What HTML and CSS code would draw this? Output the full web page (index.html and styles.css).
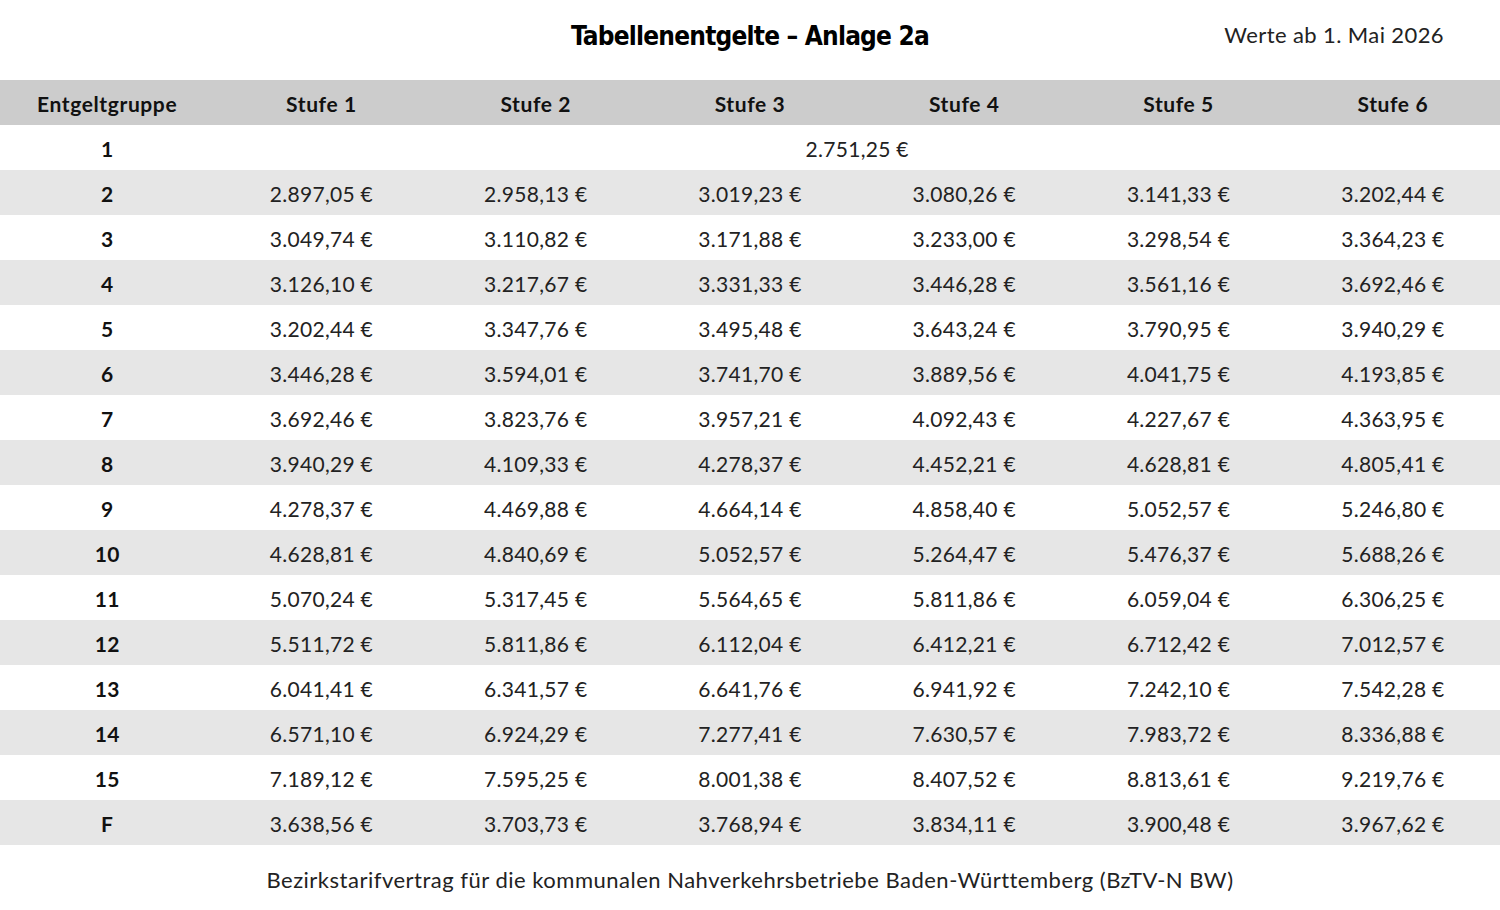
FILE: index.html
```html
<!DOCTYPE html>
<html lang="de">
<head>
<meta charset="utf-8">
<title>Tabellenentgelte – Anlage 2a</title>
<link rel="stylesheet" href="styles.css">
</head>
<body>
<div class="page">
  <header class="top">
    <h1 class="title">Tabellenentgelte – Anlage 2a</h1>
    <div class="date">Werte ab 1. Mai 2026</div>
  </header>
  <div class="table">
    <div class="row head">
      <div class="cell">Entgeltgruppe</div><div class="cell">Stufe 1</div><div class="cell">Stufe 2</div><div class="cell">Stufe 3</div><div class="cell">Stufe 4</div><div class="cell">Stufe 5</div><div class="cell">Stufe 6</div>
    </div>
    <div class="row">
      <div class="cell grp">1</div><div class="cell span6">2.751,25 €</div>
    </div>
    <div class="row alt">
      <div class="cell grp">2</div><div class="cell">2.897,05 €</div><div class="cell">2.958,13 €</div><div class="cell">3.019,23 €</div><div class="cell">3.080,26 €</div><div class="cell">3.141,33 €</div><div class="cell">3.202,44 €</div>
    </div>
    <div class="row">
      <div class="cell grp">3</div><div class="cell">3.049,74 €</div><div class="cell">3.110,82 €</div><div class="cell">3.171,88 €</div><div class="cell">3.233,00 €</div><div class="cell">3.298,54 €</div><div class="cell">3.364,23 €</div>
    </div>
    <div class="row alt">
      <div class="cell grp">4</div><div class="cell">3.126,10 €</div><div class="cell">3.217,67 €</div><div class="cell">3.331,33 €</div><div class="cell">3.446,28 €</div><div class="cell">3.561,16 €</div><div class="cell">3.692,46 €</div>
    </div>
    <div class="row">
      <div class="cell grp">5</div><div class="cell">3.202,44 €</div><div class="cell">3.347,76 €</div><div class="cell">3.495,48 €</div><div class="cell">3.643,24 €</div><div class="cell">3.790,95 €</div><div class="cell">3.940,29 €</div>
    </div>
    <div class="row alt">
      <div class="cell grp">6</div><div class="cell">3.446,28 €</div><div class="cell">3.594,01 €</div><div class="cell">3.741,70 €</div><div class="cell">3.889,56 €</div><div class="cell">4.041,75 €</div><div class="cell">4.193,85 €</div>
    </div>
    <div class="row">
      <div class="cell grp">7</div><div class="cell">3.692,46 €</div><div class="cell">3.823,76 €</div><div class="cell">3.957,21 €</div><div class="cell">4.092,43 €</div><div class="cell">4.227,67 €</div><div class="cell">4.363,95 €</div>
    </div>
    <div class="row alt">
      <div class="cell grp">8</div><div class="cell">3.940,29 €</div><div class="cell">4.109,33 €</div><div class="cell">4.278,37 €</div><div class="cell">4.452,21 €</div><div class="cell">4.628,81 €</div><div class="cell">4.805,41 €</div>
    </div>
    <div class="row">
      <div class="cell grp">9</div><div class="cell">4.278,37 €</div><div class="cell">4.469,88 €</div><div class="cell">4.664,14 €</div><div class="cell">4.858,40 €</div><div class="cell">5.052,57 €</div><div class="cell">5.246,80 €</div>
    </div>
    <div class="row alt">
      <div class="cell grp">10</div><div class="cell">4.628,81 €</div><div class="cell">4.840,69 €</div><div class="cell">5.052,57 €</div><div class="cell">5.264,47 €</div><div class="cell">5.476,37 €</div><div class="cell">5.688,26 €</div>
    </div>
    <div class="row">
      <div class="cell grp">11</div><div class="cell">5.070,24 €</div><div class="cell">5.317,45 €</div><div class="cell">5.564,65 €</div><div class="cell">5.811,86 €</div><div class="cell">6.059,04 €</div><div class="cell">6.306,25 €</div>
    </div>
    <div class="row alt">
      <div class="cell grp">12</div><div class="cell">5.511,72 €</div><div class="cell">5.811,86 €</div><div class="cell">6.112,04 €</div><div class="cell">6.412,21 €</div><div class="cell">6.712,42 €</div><div class="cell">7.012,57 €</div>
    </div>
    <div class="row">
      <div class="cell grp">13</div><div class="cell">6.041,41 €</div><div class="cell">6.341,57 €</div><div class="cell">6.641,76 €</div><div class="cell">6.941,92 €</div><div class="cell">7.242,10 €</div><div class="cell">7.542,28 €</div>
    </div>
    <div class="row alt">
      <div class="cell grp">14</div><div class="cell">6.571,10 €</div><div class="cell">6.924,29 €</div><div class="cell">7.277,41 €</div><div class="cell">7.630,57 €</div><div class="cell">7.983,72 €</div><div class="cell">8.336,88 €</div>
    </div>
    <div class="row">
      <div class="cell grp">15</div><div class="cell">7.189,12 €</div><div class="cell">7.595,25 €</div><div class="cell">8.001,38 €</div><div class="cell">8.407,52 €</div><div class="cell">8.813,61 €</div><div class="cell">9.219,76 €</div>
    </div>
    <div class="row alt">
      <div class="cell grp">F</div><div class="cell">3.638,56 €</div><div class="cell">3.703,73 €</div><div class="cell">3.768,94 €</div><div class="cell">3.834,11 €</div><div class="cell">3.900,48 €</div><div class="cell">3.967,62 €</div>
    </div>
  </div>
  <footer class="foot">Bezirkstarifvertrag für die kommunalen Nahverkehrsbetriebe Baden-Württemberg (BzTV-N BW)</footer>
</div>
</body>
</html>
```
FILE: styles.css
```css
* { box-sizing: border-box; }
html, body { margin: 0; padding: 0; background: #ffffff; }
body {
  font-family: Lato, "Noto Sans", "Liberation Sans", sans-serif;
  color: #222222;
  width: 1500px;
}
.page { display: flex; flex-direction: column; }
.top {
  height: 80px;
  position: relative;
  display: flex;
  align-items: center;
  justify-content: center;
  padding-bottom: 8px;
}
.title {
  margin: 0;
  font-family: "DejaVu Sans Condensed", "DejaVu Sans", sans-serif;
  font-stretch: condensed;
  font-weight: 700;
  font-size: 26px;
  color: #000000;
  letter-spacing: -0.8px;
}
.date {
  position: absolute;
  right: 56px;
  top: 21px;
  font-size: 22px;
  letter-spacing: 0.4px;
  color: #222222;
}
.table { display: flex; flex-direction: column; }
.row {
  display: grid;
  grid-template-columns: repeat(7, 1fr);
  height: 45px;
  align-items: center;
  background: #ffffff;
  padding-top: 1px;
}
.row.alt { background: #e6e6e6; }
.row.head { background: #cccccc; }
.row.head .cell { font-weight: 700; color: #111111; letter-spacing: 0.6px; }
.cell {
  text-align: center;
  font-size: 21px;
  letter-spacing: 0.3px;
  white-space: nowrap;
}
.cell.grp { font-weight: 700; color: #111111; }
.cell.span6 { grid-column: 2 / 8; }
.foot {
  height: 65px;
  display: flex;
  align-items: center;
  justify-content: center;
  font-size: 22px;
  letter-spacing: 0.5px;
  color: #222222;
  padding-top: 4px;
}
```
